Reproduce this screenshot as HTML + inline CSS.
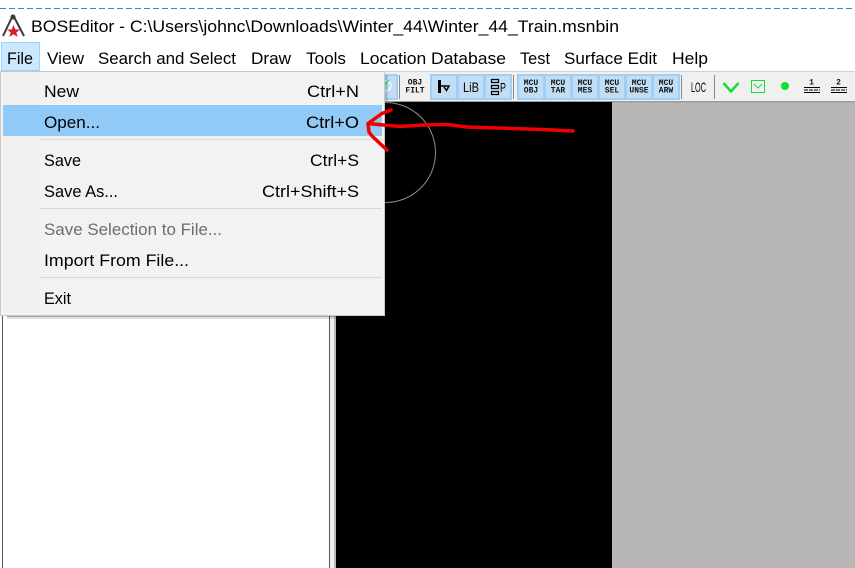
<!DOCTYPE html>
<html><head><meta charset="utf-8"><style>
html,body{margin:0;padding:0;background:#fff;overflow:hidden;width:855px;height:568px}
svg{display:block}
text{font-family:"Liberation Sans",sans-serif;fill:#000}
.m{font-size:17px}
.t{font-family:"Liberation Mono",monospace;font-size:8px;font-weight:bold;text-anchor:middle;fill:#111}
.b{fill:#c2def5;stroke:#a0cef5;stroke-width:2}
</style></head><body>
<svg width="855" height="568" viewBox="0 0 855 568" xmlns="http://www.w3.org/2000/svg">
<rect width="855" height="568" fill="#fff"/>
<line x1="0" y1="8.500" x2="855" y2="8.500" stroke="#1e90e0" stroke-width="1" stroke-dasharray="6 3"/>
<!-- logo -->
<path d="M13 15 L3 36 M13 15 L24 36" stroke="#3a3a3a" stroke-width="2" fill="none"/>
<circle cx="13" cy="17" r="2.500" fill="#3a3a3a"/>
<path d="M13.500 25 L15.400 29.500 L20 29.500 L16.300 32.500 L17.800 37 L13.500 34.300 L9.200 37 L10.700 32.500 L7 29.500 L11.600 29.500Z" fill="#d81e28"/>
<text class="m" x="31" y="32" textLength="588" lengthAdjust="spacingAndGlyphs">BOSEditor - C:\Users\johnc\Downloads\Winter_44\Winter_44_Train.msnbin</text>
<!-- menubar -->
<rect x="1.500" y="42.500" width="38" height="28" fill="#cce8ff" stroke="#99d1ff"/>
<text class="m" x="7" y="64" textLength="26" lengthAdjust="spacingAndGlyphs">File</text>
<text class="m" x="47" y="64" textLength="37" lengthAdjust="spacingAndGlyphs">View</text>
<text class="m" x="98" y="64" textLength="138" lengthAdjust="spacingAndGlyphs">Search and Select</text>
<text class="m" x="251" y="64" textLength="40" lengthAdjust="spacingAndGlyphs">Draw</text>
<text class="m" x="306" y="64" textLength="40" lengthAdjust="spacingAndGlyphs">Tools</text>
<text class="m" x="360" y="64" textLength="146" lengthAdjust="spacingAndGlyphs">Location Database</text>
<text class="m" x="520" y="64" textLength="30" lengthAdjust="spacingAndGlyphs">Test</text>
<text class="m" x="564" y="64" textLength="93" lengthAdjust="spacingAndGlyphs">Surface Edit</text>
<text class="m" x="672" y="64" textLength="36" lengthAdjust="spacingAndGlyphs">Help</text>
<!-- app body -->
<rect x="0" y="71" width="855" height="497" fill="#f0f0f0"/>
<rect x="0" y="71" width="855" height="1" fill="#d0d0d0"/>
<rect x="612" y="102" width="243" height="466" fill="#b9b7b5"/>
<rect x="0" y="101" width="855" height="1.500" fill="#9a9a9a"/>
<rect x="336" y="102" width="276" height="466" fill="#000"/>
<rect x="0" y="102" width="330" height="466" fill="#fff"/>
<rect x="2" y="102" width="1" height="466" fill="#555"/>
<rect x="329" y="102" width="1" height="466" fill="#555"/>
<rect x="334" y="102" width="2" height="466" fill="#bbb"/>
<circle cx="385.500" cy="152.500" r="50" fill="none" stroke="#8c8c8c" stroke-width="1"/>
<!-- toolbar -->
<rect class="b" x="386" y="75" width="11" height="24"/>
<circle cx="386" cy="86" r="5" fill="none" stroke="#fff"/>
<path d="M385 84L389 80" stroke="#10e030" stroke-width="1"/>
<line x1="399.500" y1="75" x2="399.500" y2="99" stroke="#8a8a8a" stroke-width="1"/>
<text class="t" x="415" y="84.500">OBJ</text><text class="t" x="415" y="92.500">FILT</text>
<rect class="b" x="431" y="75" width="26" height="24"/>
<rect class="b" x="458" y="75" width="26" height="24"/>
<rect class="b" x="485" y="75" width="26" height="24"/>
<path d="M439.500 80V93" stroke="#000" stroke-width="3" fill="none"/>
<path d="M440 86H449L446.500 90.500L444 87" stroke="#000" stroke-width="1.500" fill="none"/>
<text x="463" y="92" font-size="14" textLength="16" lengthAdjust="spacingAndGlyphs">LiB</text>
<path d="M491.500 79.500h7v3h-7zM491.500 85.500h7v3h-7zM491.500 91.500h7v3h-7z" fill="none" stroke="#000" stroke-width="1.200"/>
<text x="500" y="92" font-size="13" textLength="6" lengthAdjust="spacingAndGlyphs">P</text>
<line x1="513.500" y1="75" x2="513.500" y2="99" stroke="#8a8a8a" stroke-width="1"/>
<rect class="b" x="518" y="75" width="26" height="24"/>
<rect class="b" x="545" y="75" width="26" height="24"/>
<rect class="b" x="572" y="75" width="26" height="24"/>
<rect class="b" x="599" y="75" width="26" height="24"/>
<rect class="b" x="626" y="75" width="26" height="24"/>
<rect class="b" x="653" y="75" width="26" height="24"/>
<text class="t" x="531" y="85">MCU</text><text class="t" x="531" y="92.500">OBJ</text>
<text class="t" x="558" y="85">MCU</text><text class="t" x="558" y="92.500">TAR</text>
<text class="t" x="585" y="85">MCU</text><text class="t" x="585" y="92.500">MES</text>
<text class="t" x="612" y="85">MCU</text><text class="t" x="612" y="92.500">SEL</text>
<text class="t" x="639" y="85">MCU</text><text class="t" x="639" y="92.500">UNSE</text>
<text class="t" x="666" y="85">MCU</text><text class="t" x="666" y="92.500">ARW</text>
<line x1="681.500" y1="75" x2="681.500" y2="99" stroke="#8a8a8a" stroke-width="1"/>
<text x="691" y="92" font-size="14" textLength="15" lengthAdjust="spacingAndGlyphs">LOC</text>
<line x1="714.500" y1="75" x2="714.500" y2="99" stroke="#8a8a8a" stroke-width="1"/>
<path d="M723.500 83L731 91.500L738.500 83" fill="none" stroke="#10e030" stroke-width="2.500"/>
<rect x="751.500" y="80.500" width="13" height="12" fill="none" stroke="#10e030" stroke-width="1"/>
<path d="M754 84L758 88L762 84" fill="none" stroke="#10e030" stroke-width="1"/>
<circle cx="785" cy="86" r="4" fill="#10e030"/>
<text class="t" x="811.500" y="84.500">1</text>
<path d="M804 87.500H820M804 92.500H820" stroke="#000" stroke-width="1" fill="none"/>
<path d="M804 90H820" stroke="#000" stroke-width="1" stroke-dasharray="4 1" fill="none"/>
<text class="t" x="838.500" y="84.500">2</text>
<path d="M831 87.500H847M831 92.500H847" stroke="#000" stroke-width="1" fill="none"/>
<path d="M831 90H847" stroke="#000" stroke-width="1" stroke-dasharray="4 1" fill="none"/>
<!-- dropdown -->
<rect x="7" y="315" width="380" height="2" fill="#000" opacity=".35"/>
<rect x="7" y="317" width="380" height="2" fill="#000" opacity=".12"/>
<rect x="385" y="75" width="3" height="242" fill="#000" opacity=".12"/>
<rect x="0.500" y="71.500" width="384" height="244" fill="#f2f2f2" stroke="#c8c8c8"/>
<rect x="3" y="74" width="37" height="239" fill="#f0f0f0"/>
<rect x="3" y="105" width="379" height="31" fill="#91c9f7"/>
<rect x="40" y="139" width="342" height="1" fill="#d7d7d7"/>
<rect x="40" y="208" width="342" height="1" fill="#d7d7d7"/>
<rect x="40" y="277" width="342" height="1" fill="#d7d7d7"/>
<text class="m" x="44" y="97" textLength="35" lengthAdjust="spacingAndGlyphs">New</text>
<text class="m" x="307" y="97" textLength="52" lengthAdjust="spacingAndGlyphs">Ctrl+N</text>
<text class="m" x="44" y="128" textLength="56" lengthAdjust="spacingAndGlyphs">Open...</text>
<text class="m" x="306" y="128" textLength="53" lengthAdjust="spacingAndGlyphs">Ctrl+O</text>
<text class="m" x="44" y="166" textLength="37" lengthAdjust="spacingAndGlyphs">Save</text>
<text class="m" x="310" y="166" textLength="49" lengthAdjust="spacingAndGlyphs">Ctrl+S</text>
<text class="m" x="44" y="197" textLength="74" lengthAdjust="spacingAndGlyphs">Save As...</text>
<text class="m" x="262" y="197" textLength="97" lengthAdjust="spacingAndGlyphs">Ctrl+Shift+S</text>
<text class="m" x="44" y="235" textLength="178" lengthAdjust="spacingAndGlyphs" style="fill:#6d6d6d">Save Selection to File...</text>
<text class="m" x="44" y="266" textLength="145" lengthAdjust="spacingAndGlyphs">Import From File...</text>
<text class="m" x="44" y="304" textLength="27" lengthAdjust="spacingAndGlyphs">Exit</text>
<!-- red arrow -->
<path d="M573 131L543 129.500L467 127L447 124.500L423 125L400 126.500L368 123.500M391 110L382 113.500L368 123.500L369 132L372 136L387 150" fill="none" stroke="#f00000" stroke-width="3.500" stroke-linejoin="round" stroke-linecap="round"/>
</svg>
</body></html>
